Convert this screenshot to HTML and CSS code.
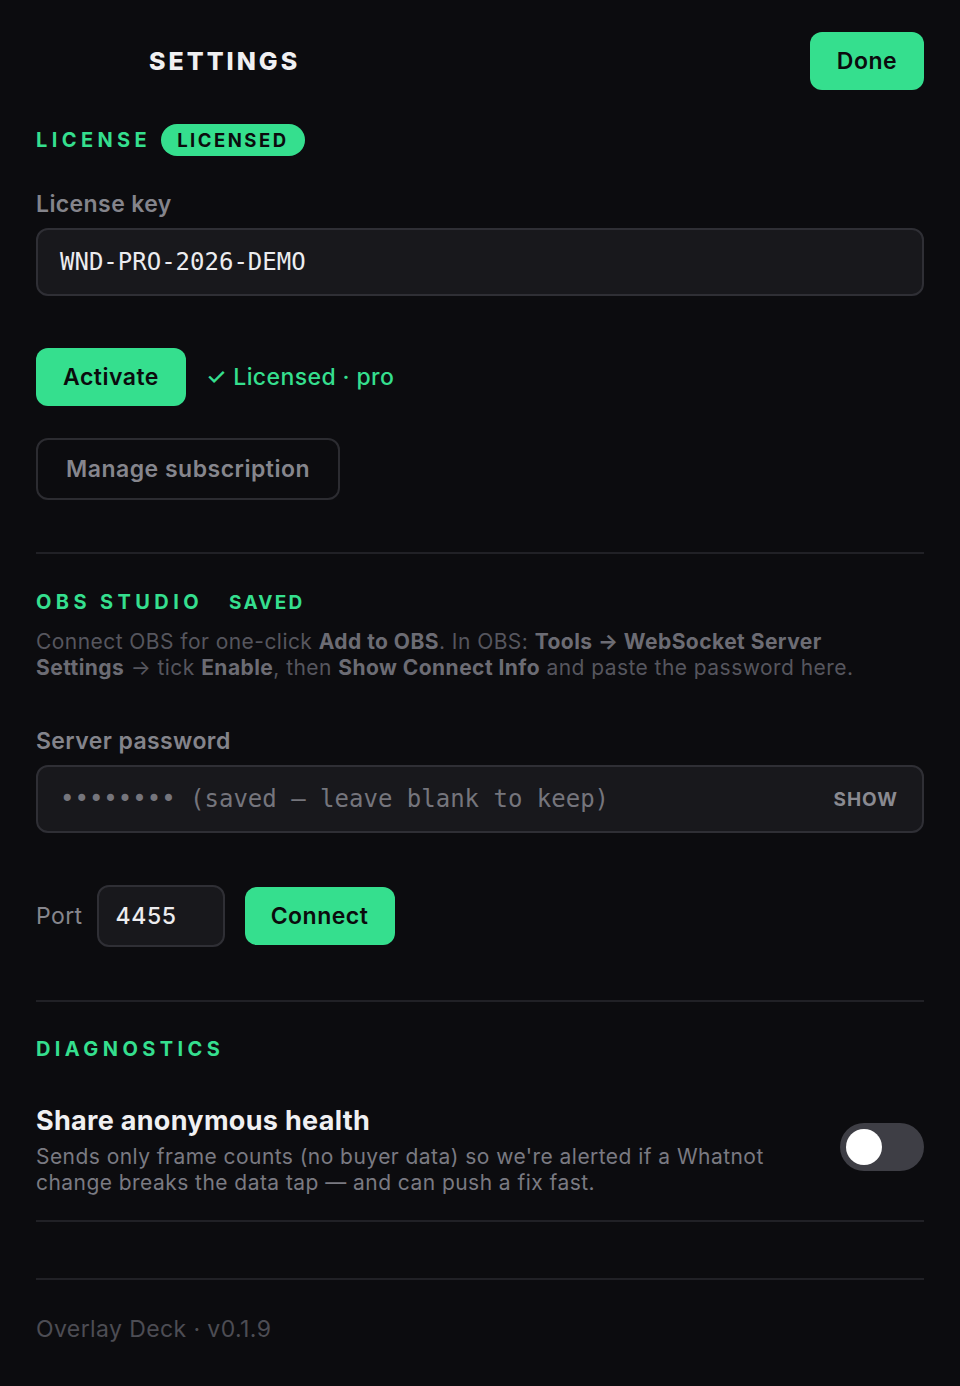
FILE: index.html
```html
<!DOCTYPE html>
<html>
<head>
<meta charset="utf-8">
<link rel="stylesheet" href="styles.css">
</head>
<body>
<div class="page">
  <header class="top">
    <h1 class="title">SETTINGS</h1>
    <button class="btn btn-green btn-done">Done</button>
  </header>

  <section class="sec sec-license">
    <div class="sec-head">
      <h2 class="sec-title">LICENSE</h2>
      <span class="badge">LICENSED</span>
    </div>
    <label class="label">License key</label>
    <div class="field"><span class="mono val">WND-PRO-2026-DEMO</span></div>
    <div class="row row-activate">
      <button class="btn btn-green btn-activate">Activate</button>
      <span class="status">✓ Licensed · pro</span>
    </div>
    <button class="btn btn-outline">Manage subscription</button>
  </section>

  <hr class="div">

  <section class="sec sec-obs">
    <div class="sec-head">
      <h2 class="sec-title">OBS STUDIO</h2>
      <span class="saved">SAVED</span>
    </div>
    <p class="desc">Connect OBS for one-click <b>Add to OBS</b>. In OBS: <b>Tools → WebSocket Server Settings</b> → tick <b>Enable</b>, then <b>Show Connect Info</b> and paste the password here.</p>
    <label class="label label-pw">Server password</label>
    <div class="field field-pw"><span class="mono ph">•••••••• (saved — leave blank to keep)</span><span class="show">SHOW</span></div>
    <div class="row row-port">
      <span class="port-label">Port</span>
      <div class="port-input">4455</div>
      <button class="btn btn-green btn-connect">Connect</button>
    </div>
  </section>

  <hr class="div div-obs">

  <section class="sec sec-diag">
    <h2 class="sec-title">DIAGNOSTICS</h2>
    <div class="opt">
      <div class="opt-text">
        <div class="opt-title">Share anonymous health</div>
        <div class="opt-desc">Sends only frame counts (no buyer data) so we're alerted if a Whatnot change breaks the data tap — and can push a fix fast.</div>
      </div>
      <div class="toggle"><span class="knob"></span></div>
    </div>
  </section>

  <hr class="div div-a">
  <hr class="div div-b">

  <footer class="foot">Overlay Deck · v0.1.9</footer>
</div>
</body>
</html>
```

FILE: styles.css
```css
* { box-sizing: border-box; }
html, body { margin: 0; padding: 0; }
body {
  background: #0c0c0f;
  font-family: Inter, "Noto Sans", sans-serif;
  color: #e9e9ec;
  width: 960px;
  height: 1386px;
  overflow: hidden;
}
.page { padding: 32px 36px 0 36px; }

.top {
  display: flex;
  align-items: center;
  justify-content: space-between;
  height: 58px;
}
.title {
  margin: 0 0 0 113px;
  font-size: 25px;
  font-weight: 800;
  letter-spacing: 3px;
  color: #f0f0f2;
}
.btn {
  font-family: Inter, sans-serif;
  border: none;
  border-radius: 12px;
  font-size: 23px;
  letter-spacing: 0.5px;
  font-weight: 600;
  cursor: pointer;
  padding: 0;
}
.btn-green { background: #35df8e; color: #0b0b0d; height: 58px; }
.btn-done { width: 114px; }
.btn-activate { width: 150px; }
.btn-connect { width: 150px; }
.btn-outline {
  background: transparent;
  border: 2px solid #2c2c31;
  color: #86868d;
  height: 62px;
  width: 304px;
  display: block;
}

.sec-head { display: flex; align-items: center; gap: 10px; }
.sec-title {
  margin: 0;
  font-size: 20px;
  font-weight: 700;
  letter-spacing: 4.4px;
  color: #35df8e;
}
.sec-license { padding-top: 34px; }
.badge {
  background: #35df8e;
  color: #0b0b0d;
  border-radius: 16px;
  height: 32px;
  padding: 0 16px;
  display: inline-flex;
  align-items: center;
  font-size: 18.5px;
  font-weight: 700;
  letter-spacing: 2.5px;
}
.saved {
  margin-left: 16px;
  font-size: 19px;
  font-weight: 700;
  letter-spacing: 2.2px;
  color: #35df8e;
}
.label {
  display: block;
  margin-top: 34px;
  font-size: 23px;
  letter-spacing: 0.4px;
  font-weight: 600;
  color: #84848b;
  line-height: 28px;
}
.field {
  margin-top: 10px;
  height: 68px;
  border: 2px solid #2f2f35;
  border-radius: 12px;
  background: #18181c;
  display: flex;
  align-items: center;
  padding: 0 24px 0 22px;
}
.mono { font-family: "DejaVu Sans Mono", "Liberation Mono", monospace; font-size: 24px; }
.val { color: #ececef; }
.ph { color: #75757c; flex: 1; }
.show {
  font-size: 19px;
  font-weight: 700;
  letter-spacing: 1px;
  color: #8a8a91;
}
.field-pw { padding-left: 22px; }
.row { display: flex; align-items: center; }
.row-activate { margin-top: 52px; gap: 20px; }
.status { color: #35df8e; font-size: 23px; letter-spacing: 0.4px; font-weight: 500; }
.btn-outline { margin-top: 32px; }

.div {
  border: none;
  height: 2px;
  background: #212126;
  margin: 52px 0 0 0;
}

.sec-obs { padding-top: 36px; }
.desc {
  margin: 15px 0 0 0;
  max-width: 850px;
  font-size: 21px;
  letter-spacing: 0.45px;
  line-height: 26px;
  color: #56565e;
}
.desc b { color: #6c6c74; font-weight: 700; }
.label-pw { margin-top: 46px; }
.row-port { margin-top: 52px; gap: 20px; }
.port-label { font-size: 23px; letter-spacing: 0.4px; color: #86868d; margin-right: -6px; }
.port-input {
  width: 128px;
  height: 62px;
  border: 2px solid #2f2f35;
  border-radius: 12px;
  background: #18181c;
  font-size: 23px;
  letter-spacing: 0.6px;
  font-weight: 500;
  color: #ececef;
  display: flex;
  align-items: center;
  padding-left: 17px;
}
.div-obs { margin-top: 53px; }

.sec-diag { padding-top: 35px; }
.opt {
  margin-top: 43px;
  display: flex;
  align-items: center;
  justify-content: space-between;
}
.opt-title { font-size: 27px; letter-spacing: 0.3px; font-weight: 700; color: #f0f0f2; line-height: 34px; }
.opt-desc { margin-top: 6px; font-size: 21px; letter-spacing: 0.45px; line-height: 26px; color: #7a7a82; width: 760px; }
.toggle {
  width: 84px;
  height: 48px;
  border-radius: 24px;
  background: #3e3e45;
  padding: 6px;
  margin-top: -6px;
}
.knob { display: block; width: 36px; height: 36px; border-radius: 50%; background: #fff; }
.div-a { margin-top: 24px; }
.div-b { margin-top: 56px; }
.foot {
  margin-top: 35px;
  font-size: 23px;
  letter-spacing: 0.4px;
  color: #4d4d54;
}
```
